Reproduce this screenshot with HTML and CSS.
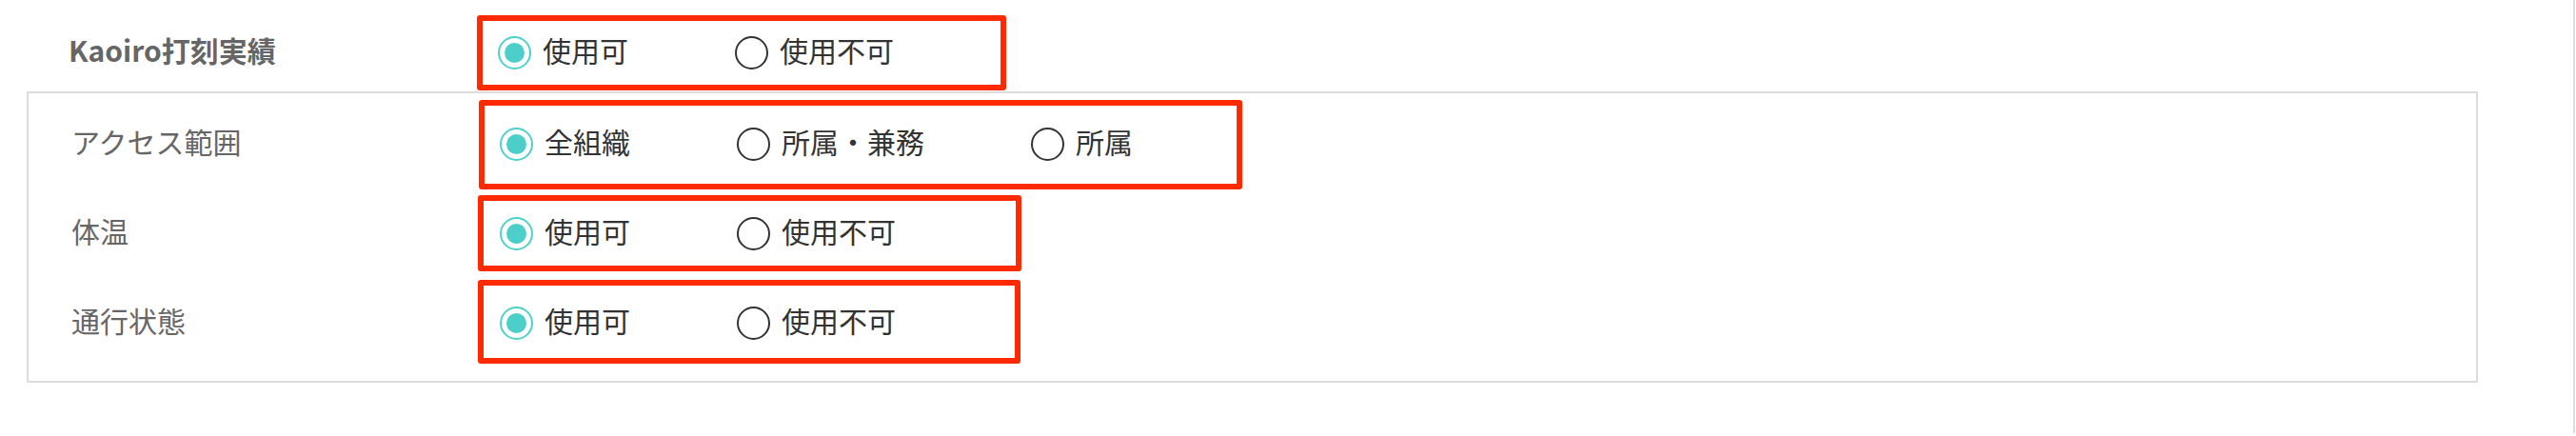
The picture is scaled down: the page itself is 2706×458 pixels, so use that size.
FILE: index.html
```html
<!DOCTYPE html>
<html lang="ja">
<head>
<meta charset="utf-8">
<title>Kaoiro設定</title>
<link rel="stylesheet" href="styles.css">
</head>
<body>
<div class="page">
  <div class="row row-title">
    <div class="label label-strong">Kaoiro打刻実績</div>
    <div class="options">
      <label class="option"><span class="radio checked"></span><span class="opt-text">使用可</span></label>
      <label class="option"><span class="radio"></span><span class="opt-text">使用不可</span></label>
    </div>
  </div>
  <div class="panel">
    <div class="row">
      <div class="label">アクセス範囲</div>
      <div class="options">
        <label class="option"><span class="radio checked"></span><span class="opt-text">全組織</span></label>
        <label class="option"><span class="radio"></span><span class="opt-text">所属・兼務</span></label>
        <label class="option"><span class="radio"></span><span class="opt-text">所属</span></label>
      </div>
    </div>
    <div class="row">
      <div class="label">体温</div>
      <div class="options">
        <label class="option"><span class="radio checked"></span><span class="opt-text">使用可</span></label>
        <label class="option"><span class="radio"></span><span class="opt-text">使用不可</span></label>
      </div>
    </div>
    <div class="row">
      <div class="label">通行状態</div>
      <div class="options">
        <label class="option"><span class="radio checked"></span><span class="opt-text">使用可</span></label>
        <label class="option"><span class="radio"></span><span class="opt-text">使用不可</span></label>
      </div>
    </div>
  </div>
  <div class="mark mark-1"></div>
  <div class="mark mark-2"></div>
  <div class="mark mark-3"></div>
  <div class="mark mark-4"></div>
</div>
</body>
</html>
```

FILE: styles.css
```css
html, body {
  margin: 0;
  padding: 0;
  background: #ffffff;
}

body {
  font-family: "Noto Sans CJK JP", "Noto Sans", sans-serif;
  font-size: 30px;
  color: #333333;
}

.page {
  position: relative;
  box-sizing: border-box;
  width: 2705px;
  height: 455px;
  padding-top: 15px;
  border-right: 2px solid #dcdcdc;
}

.row {
  display: flex;
  align-items: center;
  height: 94px;
  padding-left: 45px;
}

.row-title {
  height: 80px;
  padding-left: 72px;
}

.label {
  width: 451px;
  flex: none;
  color: #666666;
  line-height: 30px;
  position: relative;
  top: -3px;
}

.panel .label {
  width: 450px;
}

.label-strong {
  font-weight: 700;
  color: #666666;
}

.panel {
  margin-top: 1px;
  margin-left: 28px;
  width: 2571px;
  border: 2px solid #dcdcdc;
  padding-top: 6px;
  padding-bottom: 14px;
}

.options {
  display: flex;
  align-items: center;
}

.option {
  display: flex;
  align-items: center;
  margin-right: 112px;
}

.radio {
  box-sizing: border-box;
  width: 35px;
  height: 35px;
  flex: none;
  border: 2px solid #333333;
  border-radius: 50%;
  margin-right: 12px;
  position: relative;
}

.radio.checked {
  border-color: #4fd1cb;
}

.radio.checked::after {
  content: "";
  position: absolute;
  left: 50%;
  top: 50%;
  width: 21px;
  height: 21px;
  margin-left: -10.5px;
  margin-top: -10.5px;
  border-radius: 50%;
  background: #4ccfc8;
}

.opt-text {
  line-height: 30px;
  color: #333333;
  position: relative;
  top: -3px;
}

.mark {
  position: absolute;
  box-sizing: border-box;
  border: 6px solid #ff2a00;
  border-radius: 3px;
}

.mark-1 { left: 501px; top: 16px; width: 556px; height: 79px; }
.mark-2 { left: 503px; top: 105px; width: 802px; height: 94px; }
.mark-3 { left: 502px; top: 205px; width: 571px; height: 80px; }
.mark-4 { left: 502px; top: 294px; width: 570px; height: 88px; }
```
